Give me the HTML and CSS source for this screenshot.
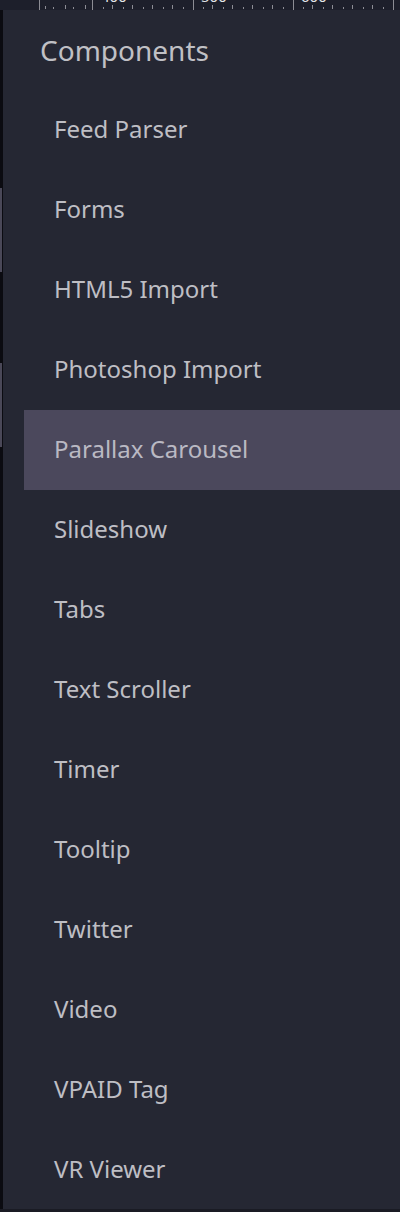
FILE: index.html
```html
<!DOCTYPE html>
<html>
<head>
<meta charset="utf-8">
<link rel="stylesheet" href="styles.css">
</head>
<body>
<div class="ruler">
<svg width="400" height="10" viewBox="0 0 400 10">
<g fill="#e6e6ea" font-family="Noto Sans, sans-serif" font-size="15">
<text x="101" y="2">400</text>
<text x="201" y="2">500</text>
<text x="301" y="2">600</text>
</g>
<g stroke="#8c8c94" stroke-width="1">
<line x1="39.5" y1="0" x2="39.5" y2="10"/>
<line x1="45.5" y1="6" x2="45.5" y2="9"/>
<line x1="53.5" y1="7" x2="53.5" y2="9"/>
<line x1="65.5" y1="5" x2="65.5" y2="9"/>
<line x1="73.5" y1="7" x2="73.5" y2="9"/>
<line x1="85.5" y1="5" x2="85.5" y2="9"/>
<line x1="92.5" y1="0" x2="92.5" y2="10"/>
<line x1="103.5" y1="7" x2="103.5" y2="9"/>
<line x1="112.5" y1="5" x2="112.5" y2="9"/>
<line x1="123.5" y1="7" x2="123.5" y2="9"/>
<line x1="132.5" y1="5" x2="132.5" y2="9"/>
<line x1="143.5" y1="7" x2="143.5" y2="9"/>
<line x1="152.5" y1="5" x2="152.5" y2="9"/>
<line x1="163.5" y1="7" x2="163.5" y2="9"/>
<line x1="172.5" y1="5" x2="172.5" y2="9"/>
<line x1="183.5" y1="7" x2="183.5" y2="9"/>
<line x1="193.5" y1="0" x2="193.5" y2="10"/>
<line x1="203.5" y1="7" x2="203.5" y2="9"/>
<line x1="212.5" y1="5" x2="212.5" y2="9"/>
<line x1="223.5" y1="7" x2="223.5" y2="9"/>
<line x1="232.5" y1="5" x2="232.5" y2="9"/>
<line x1="243.5" y1="7" x2="243.5" y2="9"/>
<line x1="252.5" y1="5" x2="252.5" y2="9"/>
<line x1="263.5" y1="7" x2="263.5" y2="9"/>
<line x1="272.5" y1="5" x2="272.5" y2="9"/>
<line x1="283.5" y1="7" x2="283.5" y2="9"/>
<line x1="293.5" y1="0" x2="293.5" y2="10"/>
<line x1="303.5" y1="7" x2="303.5" y2="9"/>
<line x1="312.5" y1="5" x2="312.5" y2="9"/>
<line x1="323.5" y1="7" x2="323.5" y2="9"/>
<line x1="332.5" y1="5" x2="332.5" y2="9"/>
<line x1="343.5" y1="7" x2="343.5" y2="9"/>
<line x1="352.5" y1="5" x2="352.5" y2="9"/>
<line x1="363.5" y1="7" x2="363.5" y2="9"/>
<line x1="372.5" y1="5" x2="372.5" y2="9"/>
<line x1="383.5" y1="7" x2="383.5" y2="9"/>
<line x1="393.5" y1="0" x2="393.5" y2="10"/>
</g>
</svg>
</div>
<div class="main">
  <div class="edge">
    <div class="seg seg-a"></div>
    <div class="seg seg-b"></div>
  </div>
  <div class="panel">
    <div class="heading">Components</div>
    <ul class="list">
      <li class="item">Feed Parser</li>
      <li class="item">Forms</li>
      <li class="item">HTML5 Import</li>
      <li class="item">Photoshop Import</li>
      <li class="item active">Parallax Carousel</li>
      <li class="item">Slideshow</li>
      <li class="item">Tabs</li>
      <li class="item">Text Scroller</li>
      <li class="item">Timer</li>
      <li class="item">Tooltip</li>
      <li class="item">Twitter</li>
      <li class="item">Video</li>
      <li class="item">VPAID Tag</li>
      <li class="item">VR Viewer</li>
    </ul>
  </div>
</div>
</body>
</html>
```

FILE: styles.css
```css
html, body {
  margin: 0;
  padding: 0;
  background: #1b1c26;
  width: 400px;
  height: 1212px;
  overflow: hidden;
}

.ruler {
  height: 10px;
  background: #1d1f2b;
  overflow: hidden;
}

.ruler svg {
  display: block;
}

.main {
  display: flex;
  height: 1199px;
  border-bottom: 3px solid #1a1b24;
}

.edge {
  width: 3px;
  background: #0b0b11;
  position: relative;
  flex: none;
}

.seg {
  position: absolute;
  left: 0;
  width: 2px;
  background: #4a4858;
}

.seg-a {
  top: 178px;
  height: 84px;
}

.seg-b {
  top: 353px;
  height: 84px;
}

.panel {
  flex: 1;
  background: #252733;
  font-family: "Noto Sans", "Open Sans", sans-serif;
}

.heading {
  height: 80px;
  line-height: 80px;
  padding-left: 37px;
  font-size: 28px;
  color: #c0c0c5;
}

.list {
  list-style: none;
  margin: 0;
  padding: 0;
}

.item {
  margin-left: 21px;
  height: 80px;
  line-height: 78px;
  padding-left: 30px;
  font-size: 24px;
  color: #bebec4;
  white-space: nowrap;
}

.item.active {
  background: #4b485c;
  color: #bab9c3;
}
```
